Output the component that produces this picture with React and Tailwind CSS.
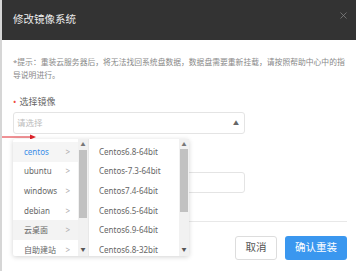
import { X } from 'lucide-react';

const osList = [
    { name: 'centos', active: true },
    { name: 'ubuntu' },
    { name: 'windows' },
    { name: 'debian' },
    { name: '云桌面', hover: true },
    { name: '自助建站' },
];

const versions = [
    'Centos6.8-64bit',
    'Centos-7.3-64bit',
    'Centos7.4-64bit',
    'Centos6.5-64bit',
    'Centos6.9-64bit',
    'Centos6.8-32bit',
];

const ScrollBar = ({ thumbTop, thumbHeight }) => (
    <div className="relative w-[10px] h-full bg-[#f1f1f1]">
        <span className="absolute left-0 right-0 top-[2px] text-center text-[5px] leading-[6px] text-[#777]">▲</span>
        <div
            className="absolute left-[1px] right-[1px] bg-[#c1c1c1]"
            style={{ top: thumbTop, height: thumbHeight }}
        />
        <span className="absolute left-0 right-0 bottom-[4px] text-center text-[5px] leading-[6px] text-[#555]">▼</span>
    </div>
);

const App = () => {
    return (
        <div
            className="relative w-[356px] h-[271px] overflow-hidden bg-white border-l-2 border-[#d6d6d6]"
            style={{ fontFamily: '"Noto Sans", "Noto Sans CJK SC", sans-serif' }}
        >
            {/* Header */}
            <div className="flex items-center justify-between h-10 bg-[#333333] pl-[11px] pr-[7px]">
                <h2 className="text-[10.5px] text-[#eeeeee]">修改镜像系统</h2>
                <X className="w-[11px] h-[11px] text-[#8a8a8a] -mt-[10px]" strokeWidth={1.5} />
            </div>

            {/* Body */}
            <div className="pl-[11px] pr-[9px] pt-[16px]">
                <p className="text-[7.8px] leading-[13px] text-[#888]">
                    *提示：重装云服务器后，将无法找回系统盘数据，数据盘需要重新挂载，请按照帮助中心中的指导说明进行。
                </p>

                <div className="mt-[14px] flex items-center gap-[3px] text-[9px] leading-[12px] text-[#666]">
                    <span className="text-[#f04c3c] text-[9px]">•</span>
                    <span>选择镜像</span>
                </div>

                <div className="mt-[4px] w-[232px] h-[22px] border border-[#e4e4e4] rounded-[3px] flex items-center justify-between pl-[3px] pr-[5px]">
                    <span className="text-[8.5px] text-[#bbbbbb]">请选择</span>
                    <span className="text-[6px] text-[#666]">▲</span>
                </div>

                <div className="mt-[38px] w-[232px] h-[21px] border border-[#e4e4e4] rounded-[3px]" />

                <div className="mt-[28px] border-t border-[#e8e8e8]" />

                <div className="mt-[14px] flex justify-end gap-[8px]">
                    <button className="w-[42px] h-[24px] border border-[#dddddd] rounded-[3px] text-[10.5px] text-[#555]">
                        取消
                    </button>
                    <button className="w-[62px] h-[24px] rounded-[3px] bg-[#3a97ef] text-[10.5px] text-white">
                        确认重装
                    </button>
                </div>
            </div>

            {/* Red pointer arrow */}
            <svg className="absolute left-0 top-[133px]" width="36" height="8" viewBox="0 0 36 8">
                <line x1="0" y1="4" x2="29" y2="4" stroke="#e0232b" strokeWidth="1" />
                <polygon points="28,1.5 34,4 28,6.5" fill="#e0232b" />
            </svg>

            {/* Cascader dropdown */}
            <div className="absolute left-[11px] top-[139px] h-[117px] flex bg-white shadow-[0_1px_5px_rgba(0,0,0,0.18)] rounded-[2px]">
                <div className="flex w-[76px] border-r border-[#e8e8e8]">
                    <ul className="flex-1 pt-[3px]">
                        {osList.map((os) => (
                            <li
                                key={os.name}
                                className={`flex items-center justify-between h-[19.6px] pl-[11px] pr-[8px] text-[8px] ${
                                    os.active ? 'bg-[#f5f5f5] text-[#3c8ee8]' : os.hover ? 'bg-[#f3f3f3] text-[#666]' : 'text-[#666]'
                                }`}
                            >
                                <span>{os.name}</span>
                                <span className="text-[8px] text-[#aaa]">&gt;</span>
                            </li>
                        ))}
                    </ul>
                    <ScrollBar thumbTop={11} thumbHeight={68} />
                </div>
                <div className="flex w-[100px]">
                    <ul className="flex-1 pt-[3px]">
                        {versions.map((v) => (
                            <li key={v} className="flex items-center h-[19.6px] pl-[10px] text-[8px] text-[#666]">
                                {v}
                            </li>
                        ))}
                    </ul>
                    <ScrollBar thumbTop={10} thumbHeight={63} />
                </div>
            </div>
        </div>
    );
};

export default App;
